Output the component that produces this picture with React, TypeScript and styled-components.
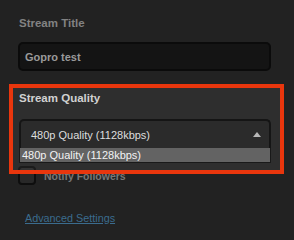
import React from 'react';
import styled, { createGlobalStyle } from 'styled-components';

const GlobalStyle = createGlobalStyle`
  html, body {
    margin: 0;
    padding: 0;
    background: #222222;
  }
  body {
    font-family: "Liberation Sans", Arial, sans-serif;
  }
`;

const Panel = styled.div`
  position: relative;
  width: 294px;
  height: 240px;
  padding: 16px 0 0 18px;
  box-sizing: border-box;
  display: flex;
  flex-direction: column;
  align-items: flex-start;
`;

const Label = styled.div<{ $bright?: boolean }>`
  font-size: 11.5px;
  line-height: 14px;
  font-weight: bold;
  color: ${p => (p.$bright ? '#cfcfcf' : '#828282')};
  padding-left: 1px;
`;

const TextField = styled.div`
  margin-top: 12px;
  width: 253px;
  height: 29px;
  box-sizing: border-box;
  background: #141414;
  border: 2px solid #0b0b0b;
  border-radius: 5px;
  display: flex;
  align-items: center;
  padding-left: 5px;
  font-size: 11px;
  font-weight: bold;
  color: #9a9a9a;
`;

const QualityLabel = styled(Label)`
  margin-top: 20px;
`;

const SelectWrap = styled.div`
  position: relative;
  margin-top: 14px;
  margin-left: 1px;
`;

const SelectBox = styled.div`
  width: 252px;
  height: 29px;
  box-sizing: border-box;
  background: #1f1f1f;
  border: 2px solid #080808;
  border-bottom: none;
  border-radius: 5px 5px 0 0;
  display: flex;
  align-items: center;
  justify-content: space-between;
  padding: 0 8px 0 10px;
  font-size: 11px;
  color: #dcdcdc;
`;

const Arrow = styled.span`
  width: 0;
  height: 0;
  border-left: 4px solid transparent;
  border-right: 4px solid transparent;
  border-bottom: 5px solid #b4b4b4;
  margin-top: -1px;
`;

const OptionList = styled.div`
  position: absolute;
  left: 0;
  top: 29px;
  width: 252px;
  box-sizing: border-box;
  border: 1px solid #0c0c0c;
  border-top: none;
  background: #555555;
  z-index: 2;
`;

const OptionRow = styled.div`
  height: 14px;
  line-height: 14px;
  padding-left: 2px;
  font-size: 11px;
  color: #f2f2f2;
  background: #5a5a5a;
`;

const CheckRow = styled.div`
  margin-top: 18px;
  display: flex;
  align-items: center;
  gap: 8px;
`;

const CheckBox = styled.div`
  width: 18px;
  height: 19px;
  box-sizing: border-box;
  border: 2px solid #0e0e0e;
  border-radius: 4px;
  background: #282828;
`;

const CheckText = styled.span`
  font-size: 10.5px;
  font-weight: bold;
  color: #777777;
`;

const AdvancedLink = styled.a`
  margin-top: 27px;
  margin-left: 7px;
  font-size: 10.8px;
  line-height: 12px;
  color: #3b6c8e;
  text-decoration: underline;
  cursor: pointer;
`;

const Highlight = styled.div`
  position: absolute;
  left: 9px;
  top: 84px;
  width: 275px;
  height: 90px;
  box-sizing: border-box;
  border: 4px solid #e9360d;
  background: rgba(255, 255, 255, 0.055);
  pointer-events: none;
  z-index: 3;
`;

export default function App() {
  return (
    <>
      <GlobalStyle />
      <Panel>
        <Label>Stream Title</Label>
        <TextField>Gopro test</TextField>
        <QualityLabel $bright>Stream Quality</QualityLabel>
        <SelectWrap>
          <SelectBox>
            <span>480p Quality (1128kbps)</span>
            <Arrow />
          </SelectBox>
          <OptionList>
            <OptionRow>480p Quality (1128kbps)</OptionRow>
          </OptionList>
        </SelectWrap>
        <CheckRow>
          <CheckBox />
          <CheckText>Notify Followers</CheckText>
        </CheckRow>
        <AdvancedLink>Advanced Settings</AdvancedLink>
        <Highlight />
      </Panel>
    </>
  );
}
